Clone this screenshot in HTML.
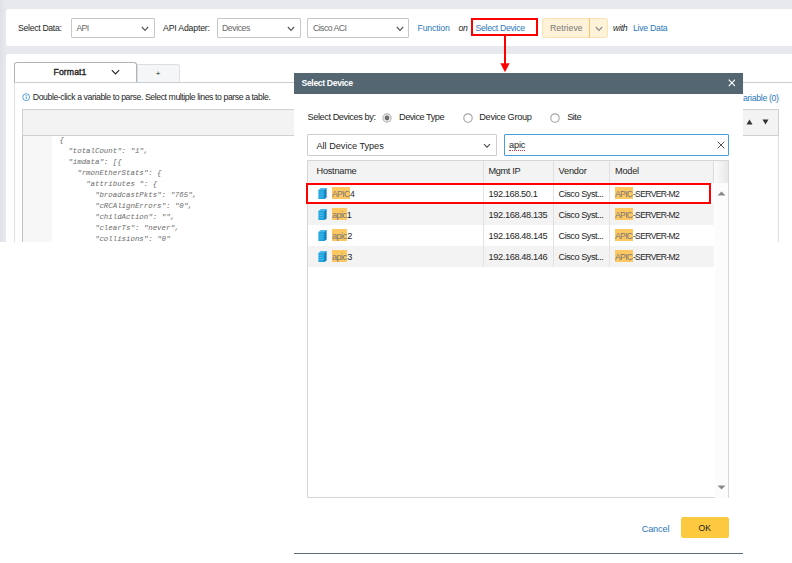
<!DOCTYPE html>
<html><head><meta charset="utf-8"><title>Select Device</title>
<style>
html,body{margin:0;padding:0;}
body{width:792px;height:563px;position:relative;overflow:hidden;background:#fff;font-family:"Liberation Sans",sans-serif;font-size:8.7px;color:#333;}
.a{position:absolute;}
.t{position:absolute;white-space:nowrap;line-height:12px;height:12px;color:#262626;}
.blue{color:#2a78b9;}
.sel{position:absolute;border:1px solid #c6c7c9;background:#fff;box-sizing:border-box;border-radius:1px;}
.it{font-style:italic;}
.code{font-family:"Liberation Mono",monospace;font-style:italic;font-size:7.4px;color:#6b6b6b;white-space:pre;position:absolute;line-height:10.94px;}
.hl{background:#fdc761;color:#777;padding:1.5px 0.5px 0.3px 0;}
.row{position:absolute;left:308px;width:406px;height:21px;}
.cell{position:absolute;white-space:nowrap;line-height:12px;top:5px;}
</style></head><body>

<!-- page background -->
<div class="a" style="left:0;top:0;width:792px;height:242px;background:#e8e9ee;"></div>
<div class="a" style="left:0;top:0;width:6px;height:242px;background:linear-gradient(90deg,#dfe1e6,#e8e9ee);"></div>
<!-- top bar panel -->
<div class="a" style="left:6px;top:9px;width:786px;height:37px;background:#fff;border-radius:3px 0 0 3px;"></div>
<!-- second panel -->
<div class="a" style="left:6px;top:54px;width:786px;height:189px;background:#fff;border-radius:3px 0 0 0;"></div>

<!-- top bar content -->
<span class="t" id="t1" style="font-size:8.7px;left:18px;top:22px;letter-spacing:-0.31px;">Select Data:</span>
<div class="sel" style="left:71px;top:18px;width:84px;height:20px;"></div>
<span class="t" id="t2" style="font-size:8.7px;left:76.5px;top:22px;color:#666;letter-spacing:-0.70px;">API</span>
<svg class="a" style="left:141px;top:26.3px;" width="8" height="6" viewBox="0 0 8 6"><path d="M0.9 1 L4 4.3 L7.1 1" fill="none" stroke="#5a5a5a" stroke-width="1.2"/></svg>
<span class="t" id="t3" style="font-size:8.7px;left:163px;top:22px;letter-spacing:-0.16px;">API Adapter:</span>
<div class="sel" style="left:217px;top:18px;width:84px;height:20px;"></div>
<span class="t" id="t4" style="font-size:8.7px;left:222px;top:22px;color:#666;letter-spacing:-0.43px;">Devices</span>
<svg class="a" style="left:287px;top:26.3px;" width="8" height="6" viewBox="0 0 8 6"><path d="M0.9 1 L4 4.3 L7.1 1" fill="none" stroke="#5a5a5a" stroke-width="1.2"/></svg>
<div class="sel" style="left:307px;top:18px;width:102px;height:20px;"></div>
<span class="t" id="t5" style="font-size:8.7px;left:313px;top:22px;color:#666;letter-spacing:-0.54px;">Cisco ACI</span>
<svg class="a" style="left:396px;top:26.3px;" width="8" height="6" viewBox="0 0 8 6"><path d="M0.9 1 L4 4.3 L7.1 1" fill="none" stroke="#5a5a5a" stroke-width="1.2"/></svg>
<span class="t blue" id="t6" style="font-size:8.7px;left:417.5px;top:22px;letter-spacing:-0.15px;">Function</span>
<span class="t it" id="t7" style="font-size:8.7px;left:458.5px;top:22px;letter-spacing:-0.35px;">on</span>
<span class="t blue" id="t8" style="font-size:8.7px;left:475.5px;top:21.8px;letter-spacing:-0.30px;">Select Device</span>
<!-- retrieve button -->
<div class="a" style="left:542px;top:18px;width:66px;height:20px;background:#fef2d8;border:1px solid #fde5b3;box-sizing:border-box;border-radius:2.5px;"></div>
<div class="a" style="left:589px;top:18px;width:1px;height:20px;background:#f8c673;"></div>
<span class="t" id="t9" style="font-size:8.7px;left:550px;top:22px;color:#777;letter-spacing:0.05px;">Retrieve</span>
<svg class="a" style="left:594.7px;top:26.1px;" width="8" height="6" viewBox="0 0 8 6"><path d="M0.8 1 L4 4.3 L7.2 1" fill="none" stroke="#8c8c8c" stroke-width="1.15"/></svg>
<span class="t it" id="t10" style="font-size:8.7px;left:613px;top:22px;letter-spacing:-0.25px;">with</span>
<span class="t blue" id="t11" style="font-size:8.7px;left:633px;top:22px;letter-spacing:-0.25px;">Live Data</span>

<!-- tabs -->
<div class="a" style="left:14px;top:82px;width:1px;height:160px;background:#dde1e5;"></div>
<div class="a" style="left:136.5px;top:64px;width:43.7px;height:18.5px;background:#f5f6f7;border:1px solid #dcdfe2;border-bottom:none;box-sizing:border-box;border-radius:0 3px 0 0;"></div>
<div class="a" style="left:14px;top:62px;width:122.7px;height:21px;background:#fff;border:1px solid #aeb3b8;border-bottom:none;box-sizing:border-box;border-radius:3px 3px 0 0;"></div>
<div class="a" style="left:14px;top:82px;width:778px;height:1px;background:#c9cdd1;"></div>
<span class="t" id="t12" style="font-size:8.7px;left:53.5px;top:66px;color:#222;font-weight:normal;-webkit-text-stroke:0.35px #222;letter-spacing:0.09px;">Format1</span>
<svg class="a" style="left:110.5px;top:69px;" width="9" height="7" viewBox="0 0 9 7"><path d="M0.8 1.2 L4.5 5 L8.2 1.2" fill="none" stroke="#222" stroke-width="1.1"/></svg>
<span class="t" style="left:155.8px;top:68.2px;color:#222;font-size:8px;">+</span>

<!-- info line -->
<svg class="a" style="left:21.7px;top:92.9px;" width="8.4" height="8.4" viewBox="0 0 8 8"><circle cx="4" cy="4" r="3.3" fill="none" stroke="#3a8fd0" stroke-width="0.8"/><rect x="3.6" y="3.4" width="0.9" height="2.4" fill="#3a8fd0"/><rect x="3.6" y="2" width="0.9" height="0.9" fill="#3a8fd0"/></svg>
<span class="t" id="t13" style="font-size:8.7px;left:32.8px;top:91px;letter-spacing:-0.41px;">Double-click a variable to parse. Select multiple lines to parse a table.</span>
<span class="t blue" id="t14" style="font-size:8.7px;left:743px;top:91.6px;letter-spacing:-0.31px;">ariable (0)</span>

<!-- toolbar + code -->
<div class="a" style="left:22px;top:109px;width:757px;height:27px;background:#f3f3f3;border:1px solid #cfcfcf;box-sizing:border-box;"></div>
<div class="a" style="left:22px;top:136px;width:1px;height:106px;background:#c2c2c2;"></div>
<div class="a" style="left:778px;top:136px;width:1px;height:106px;background:#dedede;"></div>
<div class="a" style="left:23px;top:136px;width:29px;height:106px;background:#f7f7f7;"></div>
<svg class="a" style="left:746px;top:118px;" width="26" height="8" viewBox="0 0 26 8"><path d="M0.5 6.5 L3.5 1.5 L6.5 6.5 Z" fill="#333"/><path d="M16.5 1.5 L22.5 1.5 L19.5 6.5 Z" fill="#333"/></svg>
<div class="code" id="code" style="left:59.5px;top:135.4px;">{
  "totalCount": "1",
  "imdata": [{
    "rmonEtherStats": {
      "attributes ": {
        "broadcastPkts": "765",
        "cRCAlignErrors": "0",
        "childAction": "",
        "clearTs": "never",
        "collisions": "0"</div>
<!-- crop of source screenshot: white below y=243 -->
<div class="a" style="left:0;top:242px;width:792px;height:321px;background:#fff;"></div>

<!-- dialog -->
<div class="a" style="left:294px;top:73px;width:449px;height:481px;background:#fff;"></div>
<div class="a" style="left:294px;top:73px;width:449px;height:21px;background:#536672;"></div>
<div class="a" style="left:294px;top:553px;width:449px;height:1px;background:#5c6b77;"></div>
<span class="t" id="d1" style="left:301.5px;top:76.9px;color:#fff;font-weight:bold;letter-spacing:-0.38px;">Select Device</span>
<svg class="a" style="left:727.6px;top:79.4px;" width="7.8" height="7.8" viewBox="0 0 8 8"><path d="M0.7 0.7 L7.3 7.3 M7.3 0.7 L0.7 7.3" stroke="#fff" stroke-width="1.15" fill="none"/></svg>

<span class="t" id="d2" style="font-size:9.2px;left:307.5px;top:111.4px;letter-spacing:-0.42px;">Select Devices by:</span>
<svg class="a" style="left:382px;top:112.7px;" width="10" height="10" viewBox="0 0 10 10"><circle cx="5" cy="5" r="4.1" fill="#f1f1f1" stroke="#b4b4b4" stroke-width="1.1"/><circle cx="5" cy="5" r="2.4" fill="#6e6e6e"/></svg>
<span class="t" id="d3" style="font-size:9.2px;left:399px;top:111.4px;letter-spacing:-0.49px;">Device Type</span>
<svg class="a" style="left:462.8px;top:112.5px;" width="10" height="10" viewBox="0 0 10 10"><circle cx="5" cy="5" r="4.2" fill="#fff" stroke="#a6a6a6" stroke-width="1.15"/></svg>
<span class="t" id="d4" style="font-size:9.2px;left:479.3px;top:111.4px;letter-spacing:-0.33px;">Device Group</span>
<svg class="a" style="left:550.3px;top:112.5px;" width="10" height="10" viewBox="0 0 10 10"><circle cx="5" cy="5" r="4.2" fill="#fff" stroke="#a6a6a6" stroke-width="1.15"/></svg>
<span class="t" id="d5" style="font-size:9.2px;left:567.2px;top:111.4px;letter-spacing:-0.51px;">Site</span>

<div class="sel" style="left:307px;top:134px;width:189.5px;height:21.5px;border-color:#cdcdcd;"></div>
<span class="t" id="d6" style="font-size:9.2px;left:316.5px;top:140px;letter-spacing:-0.03px;">All Device Types</span>
<svg class="a" style="left:483.3px;top:142.8px;" width="8" height="6" viewBox="0 0 8 6"><path d="M1 1.1 L4 4.2 L7 1.1" fill="none" stroke="#505050" stroke-width="1.2"/></svg>
<div class="sel" style="left:503.5px;top:134px;width:225.5px;height:21.5px;border:1.5px solid #4a9ed6;"></div>
<span class="t" id="d7" style="font-size:9.2px;left:509px;top:139.5px;border-bottom:1px dotted #e33;line-height:10px;height:10px;letter-spacing:-0.15px;">apic</span>
<svg class="a" style="left:717px;top:141px;" width="8" height="8" viewBox="0 0 8 8"><path d="M0.7 0.7 L7.3 7.3 M7.3 0.7 L0.7 7.3" stroke="#444" stroke-width="0.9" fill="none"/></svg>

<!-- table -->
<div class="a" style="left:307px;top:160px;width:422px;height:337.5px;border:1px solid #d6d6d6;box-sizing:border-box;background:#fff;"></div>
<div class="a" style="left:308px;top:161px;width:420px;height:21.5px;background:#f3f3f3;"></div>
<div class="a" style="left:483px;top:161px;width:1px;height:105.8px;background:#e0e0e0;"></div>
<div class="a" style="left:553px;top:161px;width:1px;height:105.8px;background:#e0e0e0;"></div>
<div class="a" style="left:609px;top:161px;width:1px;height:105.8px;background:#e0e0e0;"></div>
<div class="a" style="left:713.5px;top:161px;width:14.5px;height:21.5px;background:linear-gradient(90deg,#fbfbfb,#e8e8e8);"></div>
<div class="a" style="left:712.5px;top:161px;width:1px;height:21.5px;background:#dcdcdc;"></div>
<div class="a" style="left:714.5px;top:496.5px;width:13.5px;height:1px;background:#fff;"></div>
<span class="t" id="h1" style="font-size:9.2px;left:316.5px;top:164.8px;letter-spacing:-0.24px;">Hostname</span>
<span class="t" id="h2" style="font-size:9.2px;left:488.5px;top:164.8px;letter-spacing:-0.35px;">Mgmt IP</span>
<span class="t" id="h3" style="font-size:9.2px;left:558.5px;top:164.8px;letter-spacing:-0.17px;">Vendor</span>
<span class="t" id="h4" style="font-size:9.2px;left:615px;top:164.8px;letter-spacing:-0.23px;">Model</span>

<!--ROWS-->
<div class="a" style="left:308px;top:182.8px;width:406px;height:21px;background:#fff;"></div>
<div class="a" style="left:483px;top:182.8px;width:1px;height:21px;background:#e2e2e2;"></div><div class="a" style="left:553px;top:182.8px;width:1px;height:21px;background:#e2e2e2;"></div><div class="a" style="left:609px;top:182.8px;width:1px;height:21px;background:#e2e2e2;"></div>
<svg class="a" style="left:317.5px;top:187.9px;" width="9" height="11.5" viewBox="0 0 9 11.5"><path d="M0.4 1.9 L6.1 1.9 L6.1 11.4 L0.4 11.4 Z" fill="#1fa4df"/><path d="M0.4 1.9 L2.8 0.1 L8.6 0.1 L6.1 1.9 Z" fill="#45b8ec"/><path d="M6.1 1.9 L8.6 0.1 L8.6 9.6 L6.1 11.4 Z" fill="#0a7fbf"/><path d="M1.3 4.1 L5.2 4.1 M1.3 6.4 L5.2 6.4 M1.3 8.7 L5.2 8.7" stroke="#55bdea" stroke-width="0.8" fill="none"/></svg>
<span class="t" id="r0a" style="font-size:8.6px;left:332px;top:187.6px;letter-spacing:-0.64px;"><span class="hl">APIC</span>4</span>
<span class="t" id="r0b" style="font-size:9.2px;left:488.5px;top:187.6px;letter-spacing:-0.40px;">192.168.50.1</span>
<span class="t" id="r0c" style="font-size:9.2px;left:558.5px;top:187.6px;letter-spacing:-0.47px;">Cisco Syst...</span>
<span class="t" id="r0d" style="font-size:8.6px;left:615px;top:187.6px;letter-spacing:-0.66px;"><span class="hl">APIC</span>-SERVER-M2</span>
<div class="a" style="left:308px;top:203.8px;width:406px;height:21px;background:#f3f3f3;"></div>
<div class="a" style="left:483px;top:203.8px;width:1px;height:21px;background:#e2e2e2;"></div><div class="a" style="left:553px;top:203.8px;width:1px;height:21px;background:#e2e2e2;"></div><div class="a" style="left:609px;top:203.8px;width:1px;height:21px;background:#e2e2e2;"></div>
<svg class="a" style="left:317.5px;top:208.9px;" width="9" height="11.5" viewBox="0 0 9 11.5"><path d="M0.4 1.9 L6.1 1.9 L6.1 11.4 L0.4 11.4 Z" fill="#1fa4df"/><path d="M0.4 1.9 L2.8 0.1 L8.6 0.1 L6.1 1.9 Z" fill="#45b8ec"/><path d="M6.1 1.9 L8.6 0.1 L8.6 9.6 L6.1 11.4 Z" fill="#0a7fbf"/><path d="M1.3 4.1 L5.2 4.1 M1.3 6.4 L5.2 6.4 M1.3 8.7 L5.2 8.7" stroke="#55bdea" stroke-width="0.8" fill="none"/></svg>
<span class="t" id="r1a" style="font-size:9.2px;left:332px;top:208.6px;letter-spacing:-0.64px;"><span class="hl">apic</span>1</span>
<span class="t" id="r1b" style="font-size:9.2px;left:488.5px;top:208.6px;letter-spacing:-0.37px;">192.168.48.135</span>
<span class="t" id="r1c" style="font-size:9.2px;left:558.5px;top:208.6px;letter-spacing:-0.47px;">Cisco Syst...</span>
<span class="t" id="r1d" style="font-size:8.6px;left:615px;top:208.6px;letter-spacing:-0.66px;"><span class="hl">APIC</span>-SERVER-M2</span>
<div class="a" style="left:308px;top:224.8px;width:406px;height:21px;background:#fff;"></div>
<div class="a" style="left:483px;top:224.8px;width:1px;height:21px;background:#e2e2e2;"></div><div class="a" style="left:553px;top:224.8px;width:1px;height:21px;background:#e2e2e2;"></div><div class="a" style="left:609px;top:224.8px;width:1px;height:21px;background:#e2e2e2;"></div>
<svg class="a" style="left:317.5px;top:229.9px;" width="9" height="11.5" viewBox="0 0 9 11.5"><path d="M0.4 1.9 L6.1 1.9 L6.1 11.4 L0.4 11.4 Z" fill="#1fa4df"/><path d="M0.4 1.9 L2.8 0.1 L8.6 0.1 L6.1 1.9 Z" fill="#45b8ec"/><path d="M6.1 1.9 L8.6 0.1 L8.6 9.6 L6.1 11.4 Z" fill="#0a7fbf"/><path d="M1.3 4.1 L5.2 4.1 M1.3 6.4 L5.2 6.4 M1.3 8.7 L5.2 8.7" stroke="#55bdea" stroke-width="0.8" fill="none"/></svg>
<span class="t" id="r2a" style="font-size:9.2px;left:332px;top:229.6px;letter-spacing:-0.55px;"><span class="hl">apic</span>2</span>
<span class="t" id="r2b" style="font-size:9.2px;left:488.5px;top:229.6px;letter-spacing:-0.37px;">192.168.48.145</span>
<span class="t" id="r2c" style="font-size:9.2px;left:558.5px;top:229.6px;letter-spacing:-0.47px;">Cisco Syst...</span>
<span class="t" id="r2d" style="font-size:8.6px;left:615px;top:229.6px;letter-spacing:-0.66px;"><span class="hl">APIC</span>-SERVER-M2</span>
<div class="a" style="left:308px;top:245.8px;width:406px;height:21px;background:#f3f3f3;"></div>
<div class="a" style="left:483px;top:245.8px;width:1px;height:21px;background:#e2e2e2;"></div><div class="a" style="left:553px;top:245.8px;width:1px;height:21px;background:#e2e2e2;"></div><div class="a" style="left:609px;top:245.8px;width:1px;height:21px;background:#e2e2e2;"></div>
<svg class="a" style="left:317.5px;top:250.9px;" width="9" height="11.5" viewBox="0 0 9 11.5"><path d="M0.4 1.9 L6.1 1.9 L6.1 11.4 L0.4 11.4 Z" fill="#1fa4df"/><path d="M0.4 1.9 L2.8 0.1 L8.6 0.1 L6.1 1.9 Z" fill="#45b8ec"/><path d="M6.1 1.9 L8.6 0.1 L8.6 9.6 L6.1 11.4 Z" fill="#0a7fbf"/><path d="M1.3 4.1 L5.2 4.1 M1.3 6.4 L5.2 6.4 M1.3 8.7 L5.2 8.7" stroke="#55bdea" stroke-width="0.8" fill="none"/></svg>
<span class="t" id="r3a" style="font-size:9.2px;left:332px;top:250.6px;letter-spacing:-0.55px;"><span class="hl">apic</span>3</span>
<span class="t" id="r3b" style="font-size:9.2px;left:488.5px;top:250.6px;letter-spacing:-0.37px;">192.168.48.146</span>
<span class="t" id="r3c" style="font-size:9.2px;left:558.5px;top:250.6px;letter-spacing:-0.47px;">Cisco Syst...</span>
<span class="t" id="r3d" style="font-size:8.6px;left:615px;top:250.6px;letter-spacing:-0.66px;"><span class="hl">APIC</span>-SERVER-M2</span>
<!--/ROWS-->

<div class="a" style="left:714.5px;top:182.5px;width:13.5px;height:315px;background:#fcfcfc;"></div>
<!-- scrollbar arrows -->
<svg class="a" style="left:717px;top:191px;" width="9" height="5" viewBox="0 0 9 5"><path d="M0.5 4.5 L4.5 0.5 L8.5 4.5 Z" fill="#888"/></svg>
<svg class="a" style="left:717px;top:484.5px;" width="9" height="5" viewBox="0 0 9 5"><path d="M0.5 0.5 L8.5 0.5 L4.5 4.5 Z" fill="#888"/></svg>

<!-- footer -->
<span class="t blue" id="f1" style="font-size:9.2px;left:641.7px;top:522.5px;letter-spacing:-0.16px;">Cancel</span>
<div class="a" style="left:680.5px;top:517px;width:48.5px;height:21px;background:#fdc93f;border-radius:2.5px;"></div>
<span class="t" id="f2" style="font-size:8.6px;left:698.5px;top:522.4px;color:#222;letter-spacing:0.17px;">OK</span>

<!-- red annotations -->
<div class="a" style="left:471px;top:18px;width:67px;height:18px;border:2px solid #f00;box-sizing:border-box;"></div>
<div class="a" style="left:504px;top:36px;width:2px;height:29px;background:#f00;"></div>
<svg class="a" style="left:500px;top:63px;" width="10" height="10" viewBox="0 0 10 10"><path d="M0.4 0.3 L9.6 0.3 L5 9.2 Z" fill="#f00"/></svg>
<div class="a" style="left:306px;top:183px;width:405px;height:21px;border:2px solid #f00;box-sizing:border-box;"></div>
</body></html>
